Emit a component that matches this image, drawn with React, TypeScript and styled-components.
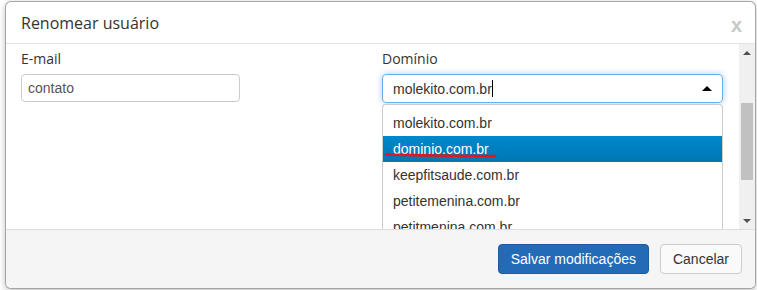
import React from "react";
import styled, { createGlobalStyle } from "styled-components";

const Global = createGlobalStyle`
  html, body { margin: 0; padding: 0; background: #ffffff; }
  body { font-family: "Liberation Sans", Arial, sans-serif; }
  * { box-sizing: border-box; }
`;

const Page = styled.div`
  width: 757px;
  height: 290px;
  padding: 1px 2px 0 5px;
  overflow: hidden;
`;

const Modal = styled.div`
  width: 751px;
  height: 288px;
  display: flex;
  flex-direction: column;
  background: #fff;
  border: 1px solid rgba(0, 0, 0, 0.35);
  border-radius: 6px;
  box-shadow: 0 2px 6px rgba(0, 0, 0, 0.25);
  overflow: hidden;
`;

const Header = styled.div`
  height: 42px;
  flex: none;
  display: flex;
  align-items: center;
  justify-content: space-between;
  padding: 0 13px 0 15px;
  border-bottom: 1px solid #e5e5e5;
`;

const Title = styled.h3`
  margin: 0;
  font-family: "Open Sans", "Liberation Sans", sans-serif;
  font-size: 16px;
  font-weight: 400;
  color: #333;
  line-height: 20px;
`;

const Close = styled.span`
  font-family: "Liberation Sans", Arial, sans-serif;
  font-size: 20px;
  font-weight: 700;
  color: #c8c8c8;
  line-height: 20px;
  margin-top: 4px;
`;

const Middle = styled.div`
  flex: 1;
  display: flex;
  min-height: 0;
`;

const Body = styled.div`
  flex: 1;
  position: relative;
  padding: 5px 0 0 15px;
  display: grid;
  grid-template-columns: 361px 341px;
  align-content: start;
  overflow: hidden;
`;

const Field = styled.div`
  position: relative;
  display: flex;
  flex-direction: column;
  gap: 5px;
`;

const Label = styled.label`
  font-family: "Open Sans", "Liberation Sans", sans-serif;
  font-size: 14px;
  line-height: 20px;
  color: #333;
`;

const TextBox = styled.div`
  width: 219px;
  height: 28px;
  border: 1px solid #ccc;
  border-radius: 4px;
  display: flex;
  align-items: center;
  padding: 0 6px;
  font-size: 14px;
  color: #555;
`;

const SelectBox = styled.div`
  width: 341px;
  height: 29px;
  border: 1px solid #66afe9;
  border-radius: 4px;
  box-shadow: 0 0 6px rgba(102, 175, 233, 0.6);
  display: flex;
  align-items: center;
  padding: 0 10px;
  font-size: 14px;
  color: #333;
`;

const Caret = styled.span`
  display: inline-block;
  width: 1px;
  height: 17px;
  background: #000;
  margin-left: 0px;
`;

const Arrow = styled.span`
  margin-left: auto;
  width: 0;
  height: 0;
  border-left: 5px solid transparent;
  border-right: 5px solid transparent;
  border-bottom: 5px solid #000;
`;

const Menu = styled.ul`
  position: absolute;
  top: 55px;
  left: 0;
  width: 341px;
  margin: 0;
  padding: 5px 0 0;
  list-style: none;
  background: #fff;
  border: 1px solid #ccc;
  border-bottom: none;
  border-radius: 4px 4px 0 0;
`;

const Item = styled.li<{ $active?: boolean }>`
  position: relative;
  height: 26px;
  line-height: 26px;
  padding-left: 10px;
  font-size: 14px;
  color: ${(p) => (p.$active ? "#fff" : "#333")};
  background: ${(p) =>
    p.$active ? "linear-gradient(to bottom, #0088cc, #0077b3)" : "transparent"};
`;

const Scribble = styled.svg`
  position: absolute;
  left: 2px;
  top: 16px;
  overflow: visible;
`;

const ScrollBar = styled.div`
  width: 16px;
  flex: none;
  background: #f0f0f0;
  display: flex;
  flex-direction: column;
  align-items: center;
`;

const ScrollBtn = styled.div<{ $down?: boolean }>`
  height: 17px;
  width: 100%;
  display: flex;
  align-items: center;
  justify-content: center;
  margin-top: ${(p) => (p.$down ? "auto" : "0")};
  &::after {
    content: "";
    width: 0;
    height: 0;
    border-left: 4px solid transparent;
    border-right: 4px solid transparent;
    ${(p) =>
      p.$down ? "border-top: 4px solid #505050;" : "border-bottom: 4px solid #505050;"}
  }
`;

const Thumb = styled.div`
  margin-top: 42px;
  width: 12px;
  height: 77px;
  background: #c1c1c1;
`;

const Footer = styled.div`
  height: 59px;
  flex: none;
  display: flex;
  align-items: center;
  justify-content: flex-end;
  gap: 11px;
  padding: 0 13px 1px 0;
  background: #f5f5f5;
  border-top: 1px solid #ddd;
`;

const Button = styled.button<{ $primary?: boolean }>`
  height: 30px;
  padding: 0 12px;
  font-family: "Liberation Sans", Arial, sans-serif;
  font-size: 14px;
  border-radius: 4px;
  cursor: pointer;
  color: ${(p) => (p.$primary ? "#fff" : "#333")};
  background: ${(p) => (p.$primary ? "#236cb5" : "#fafafa")};
  border: 1px solid ${(p) => (p.$primary ? "#1d5c9c" : "#ccc")};
`;

const domains = [
  "molekito.com.br",
  "dominio.com.br",
  "keepfitsaude.com.br",
  "petitemenina.com.br",
  "petitmenina.com.br",
];

export default function App() {
  return (
    <>
      <Global />
      <Page>
        <Modal>
          <Header>
            <Title>Renomear usuário</Title>
            <Close>x</Close>
          </Header>
          <Middle>
            <Body>
              <Field>
                <Label>E-mail</Label>
                <TextBox>contato</TextBox>
              </Field>
              <Field>
                <Label>Domínio</Label>
                <SelectBox>
                  molekito.com.br
                  <Caret />
                  <Arrow />
                </SelectBox>
                <Menu>
                  {domains.map((d, i) => (
                    <Item key={d} $active={i === 1}>
                      {d}
                      {i === 1 && (
                        <Scribble width="112" height="6" viewBox="0 0 112 6">
                          <path
                            d="M1 2.5 C 30 3.5, 70 3.5, 110 4"
                            stroke="#e8141c"
                            strokeWidth="2.5"
                            fill="none"
                            strokeLinecap="round"
                          />
                        </Scribble>
                      )}
                    </Item>
                  ))}
                </Menu>
              </Field>
            </Body>
            <ScrollBar>
              <ScrollBtn />
              <Thumb />
              <ScrollBtn $down />
            </ScrollBar>
          </Middle>
          <Footer>
            <Button $primary>Salvar modificações</Button>
            <Button>Cancelar</Button>
          </Footer>
        </Modal>
      </Page>
    </>
  );
}
